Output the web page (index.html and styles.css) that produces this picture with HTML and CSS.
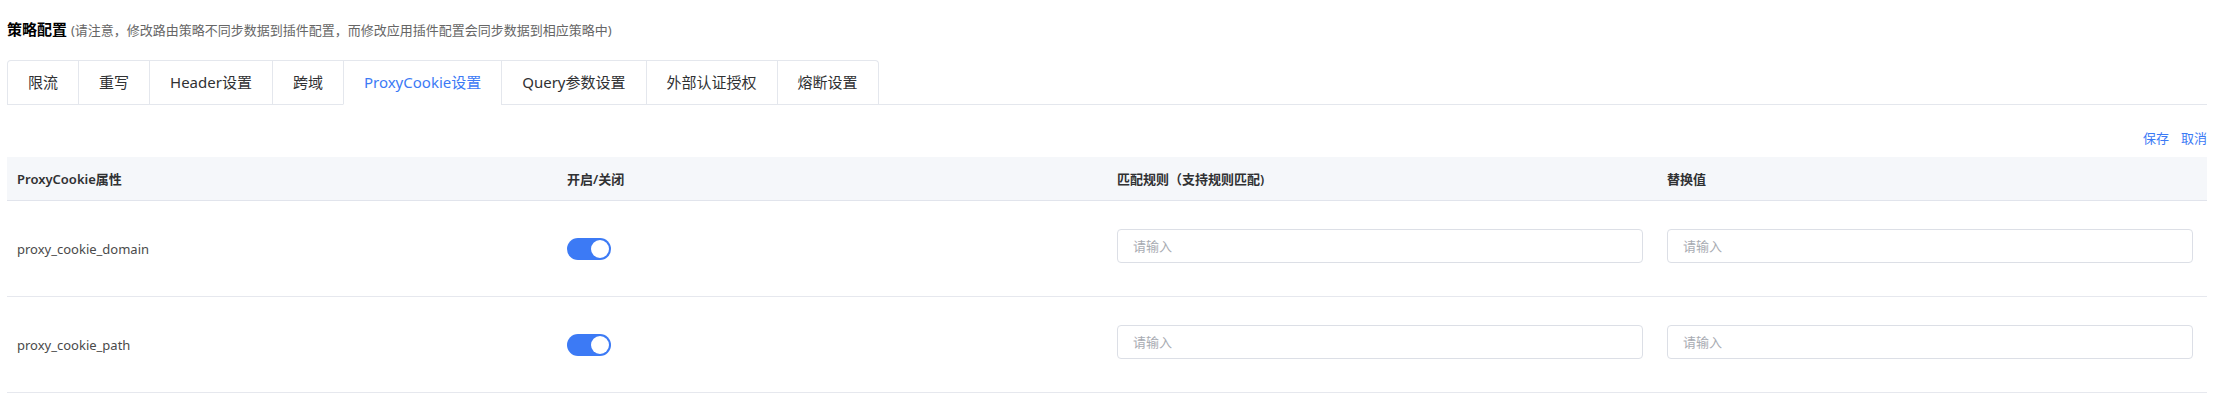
FILE: index.html
```html
<!doctype html>
<html lang="zh-CN">
	<head>
		<meta charset="utf-8" />
		<title>策略配置</title>
		<link rel="stylesheet" href="styles.css">
	</head>
	<body>
		<div id="wrapper">
			<header>
				<h1>策略配置 <small>(请注意，修改路由策略不同步数据到插件配置，而修改应用插件配置会同步数据到相应策略中)</small></h1>
			</header>

			<nav class="tabs">
				<ul>
					<li>限流</li>
					<li>重写</li>
					<li>Header设置</li>
					<li>跨域</li>
					<li class="active">ProxyCookie设置</li>
					<li>Query参数设置</li>
					<li>外部认证授权</li>
					<li>熔断设置</li>
				</ul>
			</nav>

			<main>
				<div class="toolbar">
					<a href="#">保存</a>
					<a href="#">取消</a>
				</div>

				<table class="grid">
					<colgroup>
						<col /><col /><col /><col />
					</colgroup>
					<thead>
						<tr>
							<th>ProxyCookie属性</th>
							<th>开启/关闭</th>
							<th>匹配规则（支持规则匹配)</th>
							<th>替换值</th>
						</tr>
					</thead>
					<tbody>
						<tr>
							<td>proxy_cookie_domain</td>
							<td><span class="switch on"></span></td>
							<td><input type="text" placeholder="请输入" /></td>
							<td><input type="text" placeholder="请输入" /></td>
						</tr>
						<tr>
							<td>proxy_cookie_path</td>
							<td><span class="switch on"></span></td>
							<td><input type="text" placeholder="请输入" /></td>
							<td><input type="text" placeholder="请输入" /></td>
						</tr>
					</tbody>
				</table>
			</main>
		</div>
	</body>
</html>
```

FILE: styles.css
```css
body {
	margin: 0;
	padding: 0;
	background-color: #fff;
	font-family: "Noto Sans", "Noto Sans CJK SC", sans-serif;
	color: #303133;
}

div#wrapper {
	width: 2200px;
	padding: 20px 0 0 7px;
}

header h1 {
	margin: 0;
	height: 18px;
	font-size: 15px;
	line-height: 18px;
	font-weight: bold;
	color: #000;
}

header h1 small {
	font-size: 13px;
	font-weight: normal;
	color: #666;
}

nav.tabs {
	margin: 22px 0 0;
	border-bottom: 1px solid #e4e7ed;
}

nav.tabs ul {
	display: inline-flex;
	margin: 0 0 -1px;
	padding: 0;
	list-style: none;
	border: 1px solid #e4e7ed;
	border-bottom: none;
	border-radius: 4px 4px 0 0;
}

nav.tabs li {
	height: 43px;
	padding: 0 20px;
	font-size: 15px;
	line-height: 43px;
	border-left: 1px solid #e4e7ed;
	border-bottom: 1px solid transparent;
	color: #303133;
}

nav.tabs li:first-child {
	border-left: none;
}

nav.tabs li.active {
	color: #3c7af5;
	border-bottom-color: #fff;
}

.toolbar {
	display: flex;
	justify-content: flex-end;
	gap: 12px;
	height: 20px;
	margin: 23px 0 9px;
	line-height: 20px;
}

.toolbar a {
	font-size: 13px;
	color: #3c7af5;
	text-decoration: none;
}

table.grid {
	width: 2200px;
	border-collapse: collapse;
	table-layout: fixed;
}

table.grid col {
	width: 550px;
}

table.grid th {
	height: 43px;
	padding: 0 10px;
	font-size: 13px;
	font-weight: 600;
	text-align: left;
	color: #303133;
	background-color: #f5f7fa;
	border-bottom: 1px solid #e1e4ec;
}

table.grid td {
	height: 95px;
	padding: 0 14px 0 10px;
	font-size: 13px;
	color: #4a4a4a;
	border-bottom: 1px solid #e6e8ee;
}

table.grid td input {
	display: block;
	width: 100%;
	height: 34px;
	box-sizing: border-box;
	margin: 0 0 6px;
	padding: 0 15px;
	font-family: inherit;
	font-size: 13px;
	border: 1px solid #dcdfe6;
	border-radius: 4px;
	outline: none;
}

table.grid td input::placeholder {
	color: #a8abb2;
}

.switch {
	position: relative;
	display: inline-block;
	vertical-align: middle;
	width: 44px;
	height: 22px;
	border-radius: 11px;
	background-color: #dcdfe6;
}

.switch::after {
	content: "";
	position: absolute;
	top: 2px;
	left: 2px;
	width: 18px;
	height: 18px;
	border-radius: 50%;
	background-color: #fff;
}

.switch.on {
	background-color: #3c7af5;
}

.switch.on::after {
	left: 24px;
}
```
